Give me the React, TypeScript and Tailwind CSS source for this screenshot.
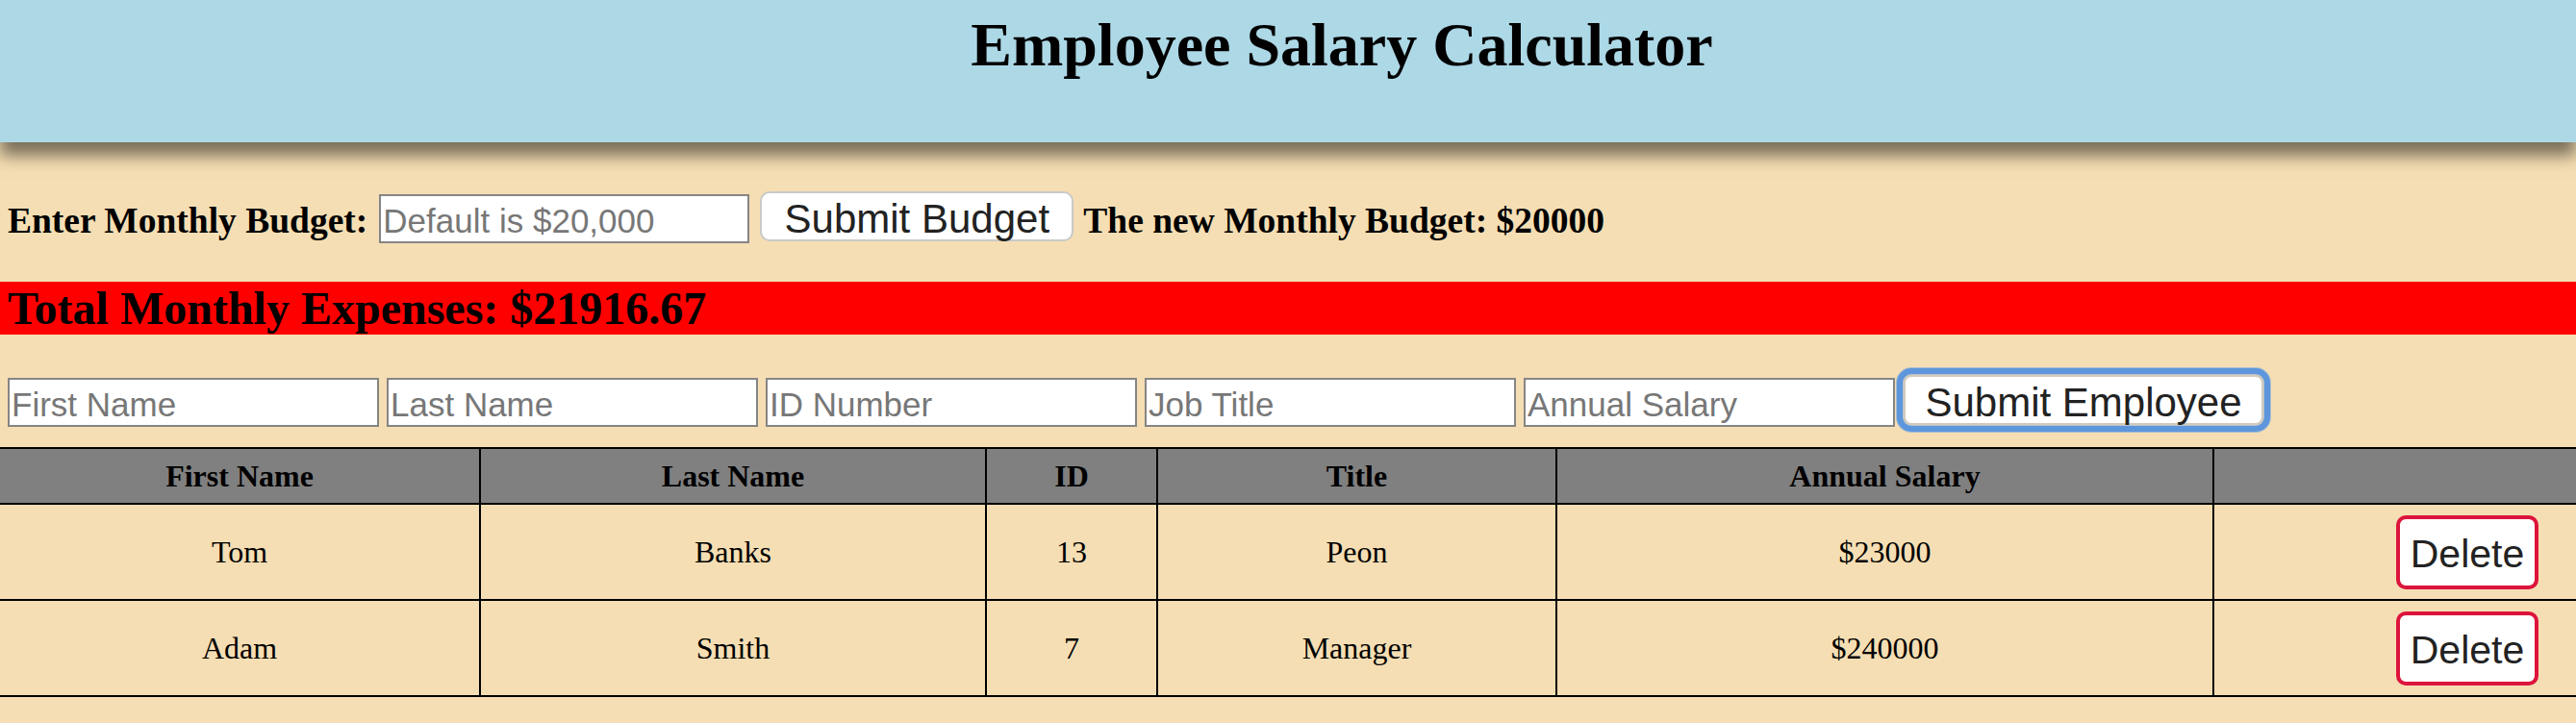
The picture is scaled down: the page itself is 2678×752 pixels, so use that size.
import React from "react";

const serif = { fontFamily: '"Liberation Serif", "Times New Roman", serif' };
const sans = { fontFamily: '"Liberation Sans", Arial, Helvetica, sans-serif' };

const cols = "grid grid-cols-[498px_526px_178px_415px_683px_1fr]";

const employees = [
  { first: "Tom", last: "Banks", id: "13", title: "Peon", salary: "$23000" },
  { first: "Adam", last: "Smith", id: "7", title: "Manager", salary: "$240000" },
];

function Input({ placeholder, width }: { placeholder: string; width: string }) {
  return (
    <input
      type="text"
      placeholder={placeholder}
      style={sans}
      className={`${width} mt-[3px] h-[51px] shrink-0 border-2 border-[#858585] bg-white px-[2px] pt-[5px] pb-0 text-[35px] text-black outline-none placeholder:text-[#777777]`}
    />
  );
}

export default function App() {
  return (
    <div style={serif} className="min-h-[752px] w-full bg-[#f5deb3] text-black">
      <header className="relative z-10 h-[148px] bg-[#add8e6] shadow-[0_14px_16px_rgba(0,0,0,0.5)]">
        <h1 className="pl-[112px] pt-[11px] text-center text-[64px] font-bold leading-[71px]">
          Employee Salary Calculator
        </h1>
      </header>

      <div className="mt-[51px] flex items-start pl-[8px]">
        <span className="mt-[10px] shrink-0 text-[37.5px] font-bold leading-[41px]">
          Enter Monthly Budget:
        </span>
        <div className="ml-[12px] flex items-start">
          <Input placeholder="Default is $20,000" width="w-[385px]" />
        </div>
        <button
          style={sans}
          className="ml-[11px] h-[52px] w-[326px] shrink-0 rounded-[10px] border-2 border-[#c9c9c9] bg-white pt-[5px] text-[42px] leading-none text-[#222222]"
        >
          Submit Budget
        </button>
        <span className="ml-[10px] mt-[10px] shrink-0 text-[37.5px] font-bold leading-[41px]">
          The new Monthly Budget: $20000
        </span>
      </div>

      <h2 className="mt-[40px] h-[55px] bg-[#ff0000] pl-[8px] text-[48px] font-bold leading-[55px]">
        Total Monthly Expenses: $21916.67
      </h2>

      <div className="mt-[42px] flex items-start gap-[8px] pl-[8px]">
        <Input placeholder="First Name" width="w-[386px]" />
        <Input placeholder="Last Name" width="w-[386px]" />
        <Input placeholder="ID Number" width="w-[386px]" />
        <Input placeholder="Job Title" width="w-[386px]" />
        <Input placeholder="Annual Salary" width="w-[386px]" />
        <button
          style={sans}
          className="ml-[1px] h-[52px] w-[374px] shrink-0 rounded-[8px] border-2 border-[#d3cabb] bg-white pt-[5px] text-[42px] leading-none text-[#222222] shadow-[0_0_0_1px_#b9c4cf,0_0_0_7px_#5d96dc,0_0_0_8px_#a9bdd2]"
        >
          Submit Employee
        </button>
      </div>

      <div className="mt-[21px]">
        <div className={`${cols} border-y-2 border-black bg-[#808080] text-[32px] font-bold`}>
          {["First Name", "Last Name", "ID", "Title", "Annual Salary", ""].map((h, i) => (
            <div
              key={i}
              className={`flex h-[56px] items-center justify-center leading-[36px] ${i > 0 ? "border-l-2 border-black" : ""}`}
            >
              {h}
            </div>
          ))}
        </div>
        {employees.map((e) => (
          <div key={e.id} className={`${cols} border-b-2 border-black text-[32px]`}>
            {[e.first, e.last, e.id, e.title, e.salary].map((v, i) => (
              <div
                key={i}
                className={`flex h-[98px] items-center justify-center leading-[36px] ${i > 0 ? "border-l-2 border-black" : ""}`}
              >
                {v}
              </div>
            ))}
            <div className="flex h-[98px] items-center justify-end border-l-2 border-black pr-[39px]">
              <button
                style={sans}
                className="h-[77px] w-[148px] rounded-[10px] border-4 border-[#dc143c] bg-white pt-[4px] text-[41px] leading-none text-[#222222]"
              >
                Delete
              </button>
            </div>
          </div>
        ))}
      </div>
    </div>
  );
}
